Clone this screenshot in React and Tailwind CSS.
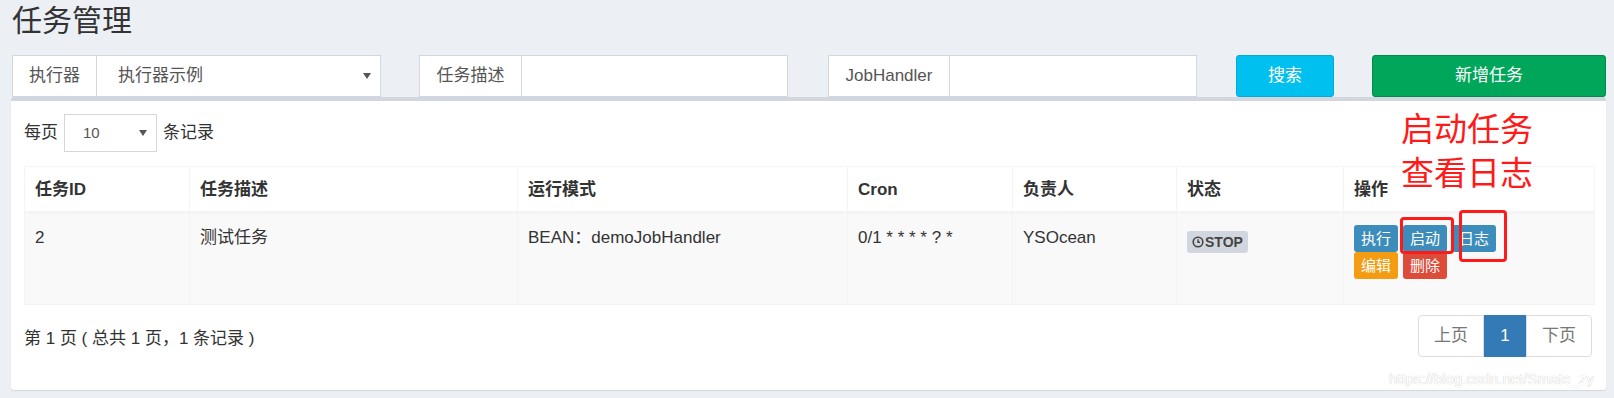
import React from 'react'

const FONT = 'font-["Liberation_Sans","Noto_Sans_CJK_SC",sans-serif]'

const COLUMNS = [
  { title: '任务ID', width: 165 },
  { title: '任务描述', width: 328 },
  { title: '运行模式', width: 330 },
  { title: 'Cron', width: 165 },
  { title: '负责人', width: 164 },
  { title: '状态', width: 167 },
  { title: '操作', width: 251 },
]

function Caret({ className = '' }) {
  return (
    <svg width="8" height="6" viewBox="0 0 8 6" className={className}>
      <path d="M0 0 L8 0 L4 6 Z" fill="#555" />
    </svg>
  )
}

function ClockIcon() {
  return (
    <svg width="12" height="12" viewBox="0 0 12 12" className="mr-[1px]">
      <circle cx="6" cy="6" r="4.8" fill="none" stroke="#444" strokeWidth="1.6" />
      <path d="M6 3.3 V6.3 H8" fill="none" stroke="#444" strokeWidth="1.4" />
    </svg>
  )
}

function FilterBox({ label, labelWidth, className = '', children }) {
  return (
    <div className={`flex w-[369px] border border-[#d2d6de] bg-white ${className}`}>
      <span
        className="flex shrink-0 items-center justify-center border-r border-[#d2d6de] text-[17px] text-[#555]"
        style={{ width: labelWidth }}
      >
        {label}
      </span>
      <div className="flex flex-1 items-center">{children}</div>
    </div>
  )
}

function ActionButton({ color, children }) {
  return (
    <span className={`inline-flex h-[27px] items-center rounded-[3px] px-[7px] text-[15px] leading-none text-white ${color}`}>
      {children}
    </span>
  )
}

export default function App() {
  return (
    <div className={`relative h-[398px] w-[1614px] overflow-hidden bg-[#ecf0f5] text-[#333] ${FONT}`}>
      {/* Header */}
      <div className="h-[55px] pl-[12px] pt-[6px]">
        <h1 className="text-[30px] leading-[30px] font-normal text-[#333]">任务管理</h1>
      </div>

      {/* Filters */}
      <div className="flex h-[42px]">
        <FilterBox label="执行器" labelWidth={84} className="ml-[12px]">
          <div className="flex w-full items-center justify-between pl-[21px] pr-[9px] text-[17px] text-[#555]">
            <span>执行器示例</span>
            <Caret />
          </div>
        </FilterBox>
        <FilterBox label="任务描述" labelWidth={102} className="ml-[38px]" />
        <FilterBox label="JobHandler" labelWidth={121} className="ml-[40px]" />
        <button className="ml-[39px] w-[98px] rounded-[3px] border border-[#00acd6] bg-[#00c0ef] text-[17px] text-white">
          搜索
        </button>
        <button className="ml-[38px] w-[234px] rounded-[3px] border border-[#008d4c] bg-[#00a65a] text-[17px] text-white">
          新增任务
        </button>
      </div>

      {/* Panel */}
      <div className="ml-[11px] w-[1595px] rounded-[3px] border-t-4 border-[#d2d6de] bg-white px-[13px] pt-[13px] pb-[33px] shadow-[0_1px_1px_rgba(0,0,0,0.1)]">
        <div className="flex h-[38px] items-center text-[17px]">
          <span>每页</span>
          <div className="ml-[6px] flex h-[38px] w-[93px] items-center justify-between border border-[#d2d6de] pl-[18px] pr-[9px] text-[15px] text-[#555]">
            <span>10</span>
            <Caret />
          </div>
          <span className="ml-[6px]">条记录</span>
        </div>

        <table className="mt-[14px] w-[1570px] table-fixed border-collapse border border-[#f4f4f4] text-[17px]">
          <colgroup>
            {COLUMNS.map(c => <col key={c.title} style={{ width: c.width }} />)}
          </colgroup>
          <thead>
            <tr className="h-[46px] border-b-[3px] border-[#f4f4f4]">
              {COLUMNS.map(c => (
                <th key={c.title} className="border-x border-[#f4f4f4] px-[10px] text-left font-bold leading-[25px]">
                  {c.title}
                </th>
              ))}
            </tr>
          </thead>
          <tbody>
            <tr className="bg-[#f9f9f9] align-top leading-[25px]">
              <td className="border border-[#f4f4f4] px-[10px] pt-[11px]">2</td>
              <td className="border border-[#f4f4f4] px-[10px] pt-[11px]">测试任务</td>
              <td className="border border-[#f4f4f4] px-[10px] pt-[11px]">BEAN：demoJobHandler</td>
              <td className="border border-[#f4f4f4] px-[10px] pt-[11px]">0/1 * * * * ? *</td>
              <td className="border border-[#f4f4f4] px-[10px] pt-[11px]">YSOcean</td>
              <td className="border border-[#f4f4f4] px-[10px] pt-[11px]">
                <span className="mt-[6px] inline-flex h-[22px] items-center rounded-[3px] bg-[#d2d6de] px-[5px] text-[14px] leading-none font-bold text-[#444]">
                  <ClockIcon />STOP
                </span>
              </td>
              <td className="border border-[#f4f4f4] px-[10px] pt-[11px] pb-[25px]">
                <div className="flex gap-[5px]">
                  <ActionButton color="bg-[#3c8dbc]">执行</ActionButton>
                  <ActionButton color="bg-[#3c8dbc]">启动</ActionButton>
                  <ActionButton color="bg-[#3c8dbc]">日志</ActionButton>
                </div>
                <div className="flex gap-[5px]">
                  <ActionButton color="bg-[#f39c12]">编辑</ActionButton>
                  <ActionButton color="bg-[#dd4b39]">删除</ActionButton>
                </div>
              </td>
            </tr>
          </tbody>
        </table>

        <div className="mt-[10px] flex h-[42px] items-center justify-between">
          <span className="pt-[5px] text-[17px]">第 1 页 ( 总共 1 页，1 条记录 )</span>
          <div className="flex h-[42px] text-[17px]">
            <span className="flex w-[66px] items-center justify-center rounded-l-[4px] border border-[#ddd] text-[#777]">上页</span>
            <span className="flex w-[42px] items-center justify-center border border-[#337ab7] bg-[#337ab7] text-white">1</span>
            <span className="mr-[1px] flex w-[66px] items-center justify-center rounded-r-[4px] border border-[#ddd] text-[#777]">下页</span>
          </div>
        </div>
      </div>

      {/* Annotations */}
      <div className="absolute left-[1401px] top-[108px] text-[33px] leading-[44px] text-[#ff1a1a]">
        <div>启动任务</div>
        <div>查看日志</div>
      </div>
      <div className="absolute left-[1400px] top-[217px] h-[37px] w-[54px] rounded-[4px] border-[3px] border-[#ff1a1a]" />
      <div className="absolute left-[1459px] top-[210px] h-[52px] w-[48px] rounded-[4px] border-[3px] border-[#ff1a1a]" />

      {/* Watermark */}
      <div className="absolute left-[1389px] top-[370px] whitespace-nowrap text-[15px] leading-[18px] text-white [text-shadow:0_0_1px_rgba(0,0,0,0.3)]">
        https://blog.csdn.net/Smate_zy
      </div>
    </div>
  )
}
